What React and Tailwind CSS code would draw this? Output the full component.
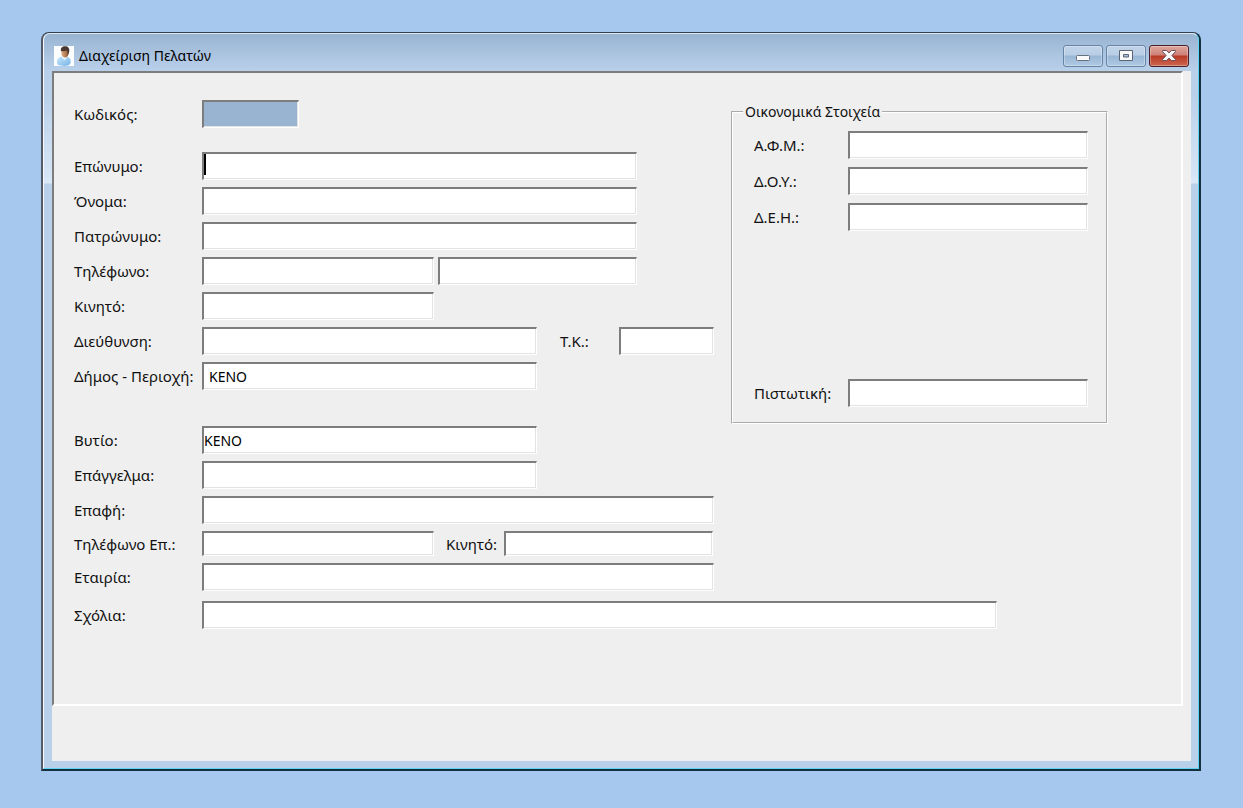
const INPUT = 'block rounded-none outline-none border-t-2 border-l-2 border-r border-b border-t-[#7d7d7d] border-l-[#7d7d7d] border-r-white border-b-white shadow-[inset_-1px_-1px_0_#e3e3e3] text-[14px] leading-[20px] text-black'

function Field({ id, label, width, height = 'h-[28px]', pad = 'px-0', bg = 'bg-white', value = '', caret = false }) {
  return (
    <div className="flex items-center">
      <label htmlFor={id} className="w-[128px] shrink-0 whitespace-nowrap">{label}</label>
      <div className="relative">
        <input id={id} type="text" defaultValue={value} className={`${INPUT} ${width} ${height} ${pad} ${bg}`} />
        {caret && <span className="absolute left-[2px] top-[2px] h-[21px] w-[2px] bg-black" />}
      </div>
    </div>
  )
}

function MoneyField({ id, label, className = '' }) {
  return (
    <div className={`flex items-center ${className}`}>
      <label htmlFor={id} className="w-[94px] shrink-0 whitespace-nowrap">{label}</label>
      <input id={id} type="text" className={`${INPUT} h-[28px] w-[240px] bg-white`} />
    </div>
  )
}

function UserIcon() {
  return (
    <svg width="20" height="20" viewBox="0 0 20 20">
      <defs>
        <linearGradient id="shirt" x1="0" y1="0" x2="1" y2="1">
          <stop offset="0" stopColor="#c9e6fb" />
          <stop offset="1" stopColor="#74b4e6" />
        </linearGradient>
        <linearGradient id="face" x1="0" y1="0" x2="1" y2="0">
          <stop offset="0" stopColor="#e3b186" />
          <stop offset="1" stopColor="#94592f" />
        </linearGradient>
      </defs>
      <rect width="20" height="20" fill="#fbfdff" />
      <path d="M3 17C2.600 13 4.500 11.200 8.500 10.500h4.200c3.200.8 4.500 3.300 3.900 6.500-.4 2-3 2.900-6.600 2.900-3.800 0-6.800-.6-7-2.900z" fill="url(#shirt)" />
      <path d="M8.500 9.500h4.200l.2 2.200-2.300 2.500-2.700-2.700z" fill="#e9f5fd" />
      <path d="M7.300 3h7v5c0 2-1.500 3.500-3.100 3.500S7.600 10 7.400 8z" fill="url(#face)" />
      <path d="M7 5C6.400 1.800 8.300.3 11 .3c3.200 0 4.800 1.900 4.200 5.300-.2 1.600-.7 2.700-1.500 3.600.1-2-.1-3.700-.9-4.600C11 5.400 9 5.300 7 5z" fill="#4a3830" />
    </svg>
  )
}

function WindowButton({ label, close = false, children }) {
  const look = close
    ? 'border-[#4b2029] bg-[linear-gradient(#dca69d_0%,#cf8177_45%,#b93a25_50%,#cc6650_100%)]'
    : 'border-[#6685a6] bg-[linear-gradient(#c0d3e8_0%,#b9cee6_45%,#98b6d5_50%,#b0c9e4_100%)]'
  return (
    <button type="button" aria-label={label}
      className={`flex h-[22px] w-[40px] items-center justify-center rounded-[3px] border shadow-[inset_0_0_0_1px_rgba(255,255,255,0.3)] ${look}`}>
      {children}
    </button>
  )
}

function TitleBar() {
  return (
    <header className="flex h-[37px] items-center pl-[10px] pr-[9px] pt-[10px] pb-[3px]">
      <UserIcon />
      <h1 className="ml-[5px] flex-1 text-[14px] leading-[20px] text-black">Διαχείριση Πελατών</h1>
      <div className="flex gap-[3px]">
        <WindowButton label="Ελαχιστοποίηση">
          <svg width="16" height="14" viewBox="0 0 16 14">
            <rect x="1.500" y="6.500" width="13" height="5" rx="1" fill="#f7f9fb" stroke="#68707c" />
          </svg>
        </WindowButton>
        <WindowButton label="Μεγιστοποίηση">
          <svg width="16" height="14" viewBox="0 0 16 14">
            <path d="M1.500 1.500h13v10h-13zM5.500 5.500v2.500h5v-2.500z" fill="#f7f9fb" fillRule="evenodd" stroke="#5b6573" />
          </svg>
        </WindowButton>
        <WindowButton label="Κλείσιμο" close>
          <svg width="16" height="14" viewBox="0 0 16 14">
            <path d="M1.500 1.500h4L8 3.900l2.500-2.400h4v1L10.900 6.500l3.600 4v1h-4L8 9.100l-2.500 2.400h-4v-1l3.600-4-3.600-4z" fill="#f7f7f8" stroke="#6c5058" />
          </svg>
        </WindowButton>
      </div>
    </header>
  )
}

export default function App() {
  return (
    <div className="min-h-screen bg-[#a6c8ef] pt-[32px] pr-[42px] pb-[37px] pl-[41px] font-['Noto_Sans',sans-serif] text-[15px] leading-[20px] text-[#111111]">
      <main className="rounded-t-[8px] border-t border-r-2 border-b-2 border-l-2 border-t-[#33404d] border-r-[#12303f] border-b-[#12303f] border-l-[#555b66] bg-[linear-gradient(#98b4d2_0px,#b9d0ea_38px,#b9d0ea_60px,#d9e7f6_150px,#b9d0ea_151px)]">
        <div className="rounded-t-[7px] border border-t-[#dfe9f3] border-l-[#f5f9fd] border-r-[#5fd3f0] border-b-[#5fd3f0]">
          <TitleBar />
          <div className="mr-[7px] mb-[7px] ml-[8px] bg-[#efefef] pb-[55px]">
            <form className="mr-[8px] border-2 border-t-[#7d7d7d] border-l-[#7d7d7d] border-r-white border-b-white pt-[27px] pb-[75px] pl-[20px]">
              <div className="flex items-start">
                <div className="w-[657px] shrink-0">
                  <Field id="code" label="Κωδικός:" width="w-[97px]" bg="bg-[#99b4d1]" />
                  <div className="mt-[24px] flex flex-col gap-[7px]">
                    <Field id="surname" label="Επώνυμο:" width="w-[435px]" caret />
                    <Field id="name" label="Όνομα:" width="w-[435px]" />
                    <Field id="father" label="Πατρώνυμο:" width="w-[435px]" />
                    <div className="flex gap-[4px]">
                      <Field id="phone" label="Τηλέφωνο:" width="w-[232px]" />
                      <input aria-label="Τηλέφωνο 2" type="text" className={`${INPUT} h-[28px] w-[199px] bg-white`} />
                    </div>
                    <Field id="mobile" label="Κινητό:" width="w-[232px]" />
                    <div className="flex items-center">
                      <Field id="address" label="Διεύθυνση:" width="w-[335px]" />
                      <label htmlFor="zip" className="ml-[23px] w-[59px]">Τ.Κ.:</label>
                      <input id="zip" type="text" className={`${INPUT} h-[28px] w-[95px] bg-white`} />
                    </div>
                    <Field id="area" label="Δήμος - Περιοχή:" width="w-[335px]" pad="px-[5px]" value="ΚΕΝΟ" />
                  </div>
                </div>

                <fieldset className="mt-[2px] h-[322px] w-[377px] shrink-0 border-2 border-white pl-[21px] [border-style:groove]">
                  <legend className="-ml-[11px] px-[2px] text-[14px]">Οικονομικά Στοιχεία</legend>
                  <div className="flex flex-col gap-[8px] pt-[9px]">
                    <MoneyField id="afm" label="Α.Φ.Μ.:" />
                    <MoneyField id="doy" label="Δ.Ο.Υ.:" />
                    <MoneyField id="deh" label="Δ.Ε.Η.:" />
                    <MoneyField id="credit" label="Πιστωτική:" className="mt-[140px]" />
                  </div>
                </fieldset>
              </div>

              <div className="mt-[2px] flex flex-col gap-[7px]">
                <Field id="tank" label="Βυτίο:" width="w-[335px]" value="ΚΕΝΟ" />
                <Field id="job" label="Επάγγελμα:" width="w-[335px]" />
                <Field id="contact" label="Επαφή:" width="w-[512px]" />
                <div className="flex items-center">
                  <Field id="contactPhone" label="Τηλέφωνο Επ.:" width="w-[232px]" height="h-[25px]" />
                  <label htmlFor="contactMobile" className="ml-[12px] w-[58px]">Κινητό:</label>
                  <input id="contactMobile" type="text" className={`${INPUT} h-[25px] w-[209px] bg-white`} />
                </div>
                <Field id="company" label="Εταιρία:" width="w-[512px]" />
              </div>
              <div className="mt-[10px]">
                <Field id="notes" label="Σχόλια:" width="w-[795px]" />
              </div>
            </form>
          </div>
        </div>
      </main>
    </div>
  )
}
